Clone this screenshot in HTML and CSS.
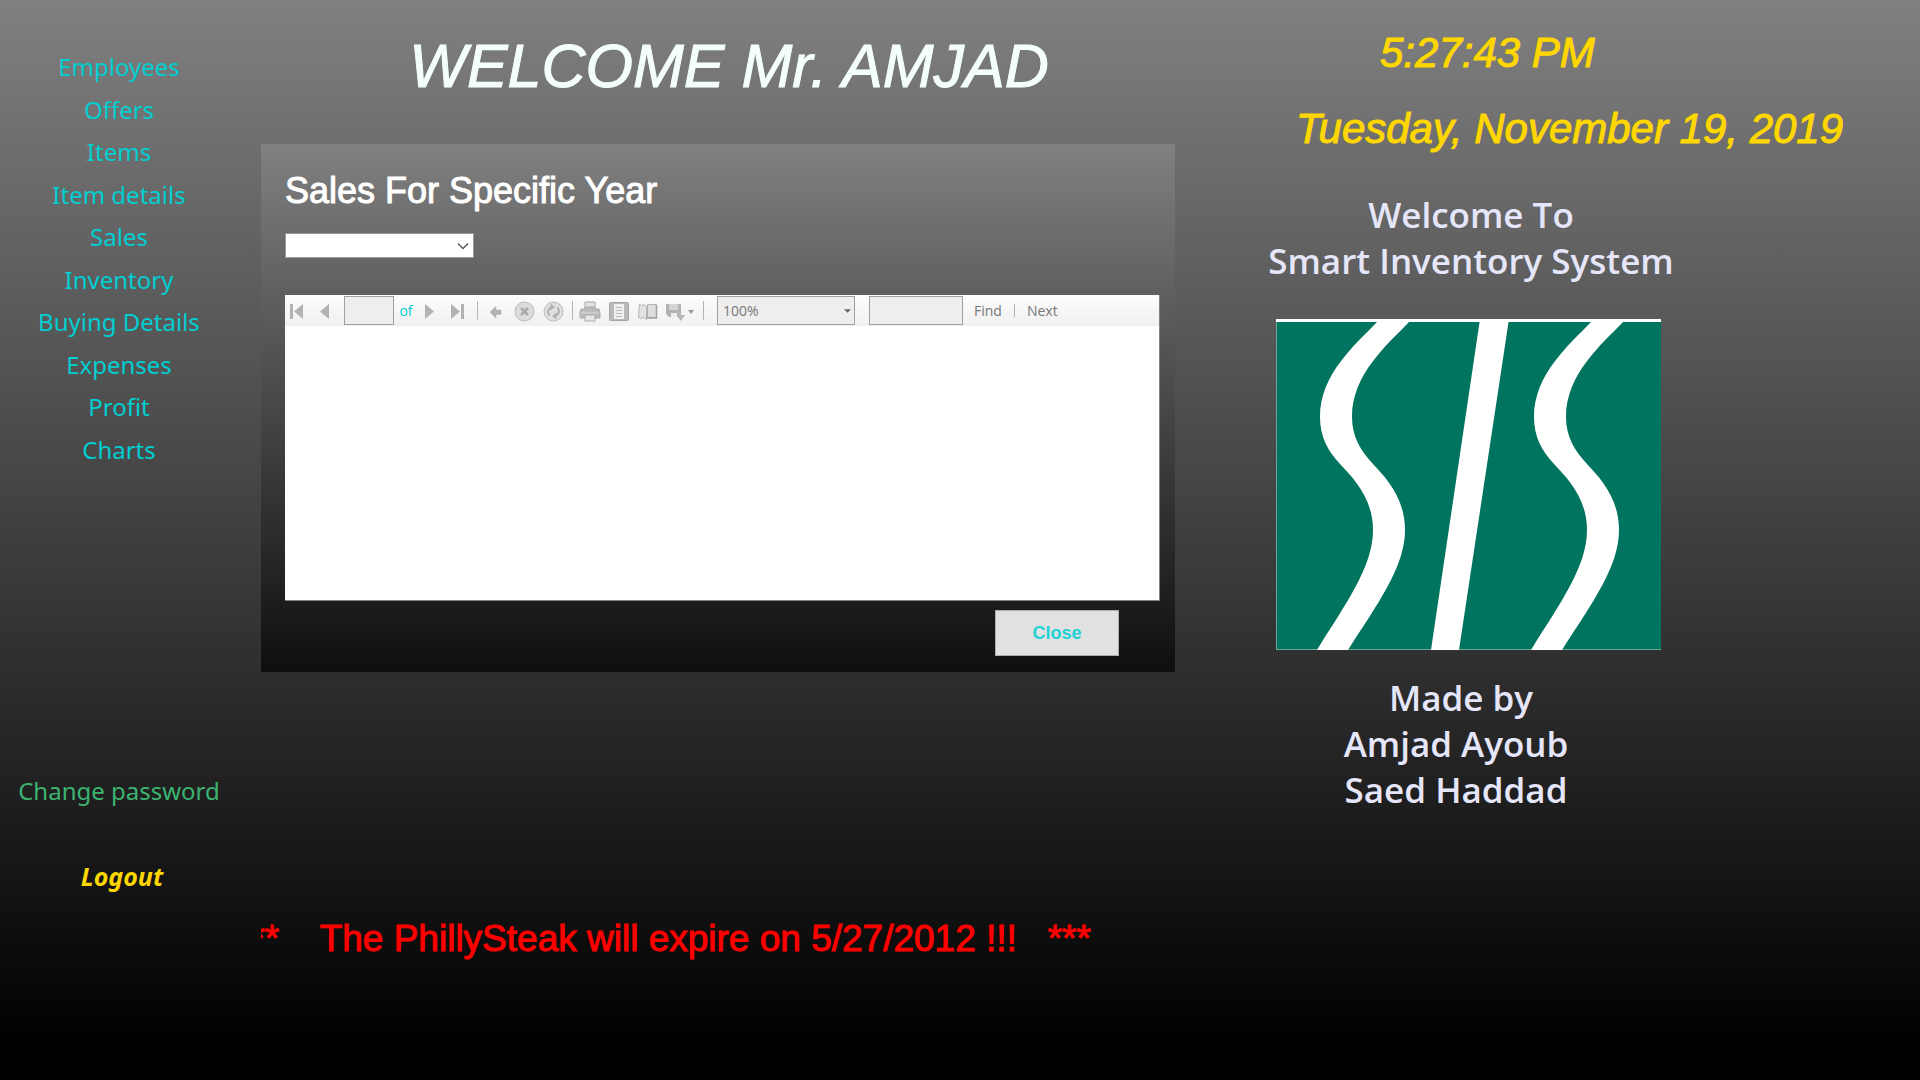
FILE: index.html
```html
<!DOCTYPE html>
<html lang="en">
<head>
<meta charset="utf-8">
<meta name="viewport" content="width=device-width, initial-scale=1">
<title>Smart Inventory System</title>
<link rel="stylesheet" href="styles.css">
</head>
<body>
<div class="app">
  <aside class="sidebar">
    <nav class="menu" aria-label="Main">
      <a href="#employees">Employees</a>
      <a href="#offers">Offers</a>
      <a href="#items">Items</a>
      <a href="#item-details">Item details</a>
      <a href="#sales">Sales</a>
      <a href="#inventory">Inventory</a>
      <a href="#buying">Buying Details</a>
      <a href="#expenses">Expenses</a>
      <a href="#profit">Profit</a>
      <a href="#charts">Charts</a>
    </nav>
    <a class="password" href="#password">Change password</a>
    <a class="logout" href="#logout">Logout</a>
  </aside>

  <main class="content">
    <h1 class="welcome">WELCOME Mr. AMJAD</h1>
    <section class="panel">
      <h2 class="panel-title"><label for="year">Sales For Specific Year</label></h2>
      <div class="year-box">
        <select class="year" id="year"><option></option></select>
        <svg class="chevron" viewBox="0 0 12 8"><path d="M1 1.500l5 5 5-5" fill="none" stroke="#555" stroke-width="1.300"/></svg>
      </div>
      <div class="report">
        <div class="toolbar">
          <div class="group">
            <button class="tool" aria-label="First page"><svg viewBox="0 0 24 24"><path d="M5 5h3v15H5zM18 5v15L9 12.500z"/></svg></button>
            <button class="tool" aria-label="Previous page"><svg viewBox="0 0 24 24"><path d="M16 5v15l-9-7.500z"/></svg></button>
          </div>
          <input class="field page" aria-label="Current page" disabled>
          <span class="of">of</span>
          <div class="group">
            <button class="tool" aria-label="Next page"><svg viewBox="0 0 24 24"><path d="M7 5v15l9-7.500z"/></svg></button>
            <button class="tool" aria-label="Last page"><svg viewBox="0 0 24 24"><path d="M5 5v15l9-7.500zM15 5h3v15h-3z"/></svg></button>
          </div>
          <span class="sep"></span>
          <div class="group wide">
            <button class="tool" aria-label="Back"><svg viewBox="0 0 24 24"><path d="M7 13l6-5.500v3.500h5v4.500h-5v3.500z" stroke="#aaa" stroke-width=".5"/></svg></button>
            <button class="tool" aria-label="Stop"><svg viewBox="0 0 24 24"><circle cx="12.500" cy="12.500" r="9.500" fill="#dcdcdc" stroke="#bcbcbc"/><path d="M9 9l7 7M16 9l-7 7" stroke="#aaa" stroke-width="2.600"/></svg></button>
            <button class="tool" aria-label="Refresh"><svg viewBox="0 0 24 24"><circle cx="12.500" cy="12.500" r="9.500" fill="#e0e0e0" stroke="#bcbcbc"/><path d="M8.500 16.500c-2.500-3-1.500-7.500 2-8.500M16.500 8.500c2.500 3 1.500 7.500-2 8.500" fill="none" stroke="#aaa" stroke-width="1.800"/><path d="M9.500 4.500l4.500 3.500-4.500 3.500zM15.500 20.500l-4.500-3.500 4.500-3.500z"/></svg></button>
          </div>
          <span class="sep"></span>
          <div class="group wide">
            <button class="tool" aria-label="Print"><svg viewBox="0 0 24 24"><path d="M7 3h10v7H7z" fill="#e2e2e2" stroke="#aaa"/><path d="M3 10h4V8h10v2h4l1 3v6H2v-6z" fill="#bcbcbc" stroke="#ababab"/><path d="M7 16h10v6H7z" fill="#e8e8e8" stroke="#aaa"/><path d="M3 14h18" stroke="#ddd"/></svg></button>
            <button class="tool" aria-label="Print layout"><svg viewBox="0 0 24 24"><rect x="2.500" y="3.500" width="19" height="18" rx="1" fill="#bababa" stroke="#a6a6a6"/><path d="M7 5h10v15H7z" fill="#f0f0f0"/><path d="M9 8.500h6M9 11.500h6M9 14.500h6M9 17.500h6" stroke="#b8b8b8"/></svg></button>
            <button class="tool" aria-label="Page setup"><svg viewBox="0 0 24 24"><path d="M11.500 5.500h9v13h-9z" fill="#dedede" stroke="#b2b2b2"/><path d="M20.500 6v13H11" fill="none" stroke="#a2a2a2" stroke-width="1.500"/><path d="M3.500 5.500l2 1 2-1 3 2v13l-3-2-2 1-3-1z" fill="#e2e2e2" stroke="#b2b2b2"/></svg></button>
          </div>
          <button class="tool export" aria-label="Export"><svg viewBox="0 0 32 24"><path d="M2 5h15v13H5l-3-3z" fill="#b2b2b2"/><path d="M5 5h9v6H5z" fill="#d4d4d4"/><path d="M7 14h6v4H7z" fill="#eee"/><path d="M13 13h4v3h4l-4 6-4-5z" fill="#b5b5b5"/><path d="M24 11h6l-3 4z" fill="#999"/></svg></button>
          <span class="sep"></span>
          <div class="zoom-box">
            <select class="field zoom" aria-label="Zoom" disabled><option>100%</option></select>
            <svg class="caret" viewBox="0 0 8 4"><path d="M0 0h8L4 4z" fill="#666"/></svg>
          </div>
          <input class="field search" aria-label="Find text" disabled>
          <button class="text-tool">Find</button>
          <span class="sep short"></span>
          <button class="text-tool">Next</button>
        </div>
      </div>
      <button class="close">Close</button>
    </section>
    <p class="ticker">***    The PhillySteak will expire on 5/27/2012 !!!   ***</p>
  </main>

  <aside class="info">
    <time class="clock">5:27:43 PM</time>
    <time class="date" datetime="2019-11-19">Tuesday, November 19, 2019</time>
    <div class="brand">
      <p class="caption">Welcome To<br>Smart Inventory System</p>
      <svg class="logo" viewBox="0 0 385 331" role="img" aria-label="SIS">
        <rect width="385" height="331" fill="#00745e"/>
        <path d="M0 330.500H385M.5 0V331" stroke="#6fa597"/>
        <path d="M0 0H385V3H0z" fill="#fff"/>
        <g fill="#fff">
          <path id="curve" d="M103 0L101 3C80 25 44 55 44 98C44 118 52 132 64 145S97 178 97 211C97 248 70 284 41 331H72C102 284 129 248 129 211C129 178 109 158 97 145S76 118 76 98C76 55 112 25 133 3L136 0z"/>
          <use href="#curve" x="214"/>
          <path d="M204 0H233L183 331H155z"/>
        </g>
      </svg>
      <div class="credits">
        <p class="caption made">Made by</p>
        <p class="caption">Amjad Ayoub<br>Saed Haddad</p>
      </div>
    </div>
  </aside>
</div>
</body>
</html>
```
FILE: styles.css
```css
* {
  box-sizing: border-box;
}

body {
  margin: 0;
  min-height: 100vh;
  background: linear-gradient(#808080, #000 97%) no-repeat #000;
  font-family: "Liberation Sans", Arial, sans-serif;
}

h1, h2, p {
  margin: 0;
  font-weight: 400;
}

a {
  text-decoration: none;
}

.app {
  display: grid;
  grid-template-columns: minmax(0, 261fr) minmax(0, 914fr) minmax(0, 745fr);
  min-height: 100vh;
}

.sidebar {
  display: flex;
  flex-direction: column;
  padding: 46px 23px 0 0;
  font-family: "Noto Sans", "Segoe UI", sans-serif;
  font-size: 24px;
  line-height: 42px;
  text-align: center;
  white-space: nowrap;
}

.menu {
  display: grid;
  grid-auto-rows: 1fr;
  min-height: 425px;
}

.menu a {
  color: #00ced1;
}

.password {
  margin-top: 299px;
  color: #3cb371;
}

.logout {
  margin-top: 43px;
  padding-left: 6px;
  color: #ffd700;
  font-size: 25px;
  font-weight: 700;
  font-style: italic;
}

.welcome,
.panel-title,
.ticker,
.clock,
.date {
  -webkit-text-stroke: 1px currentColor;
}

.welcome {
  height: 144px;
  padding: 31px 0 0 22px;
  color: #f5fffa;
  font-size: 61px;
  line-height: 70px;
  font-style: italic;
  text-align: center;
  white-space: nowrap;
}

.panel {
  display: flex;
  flex-direction: column;
  padding: 24px 15px 16px 24px;
  background: linear-gradient(#808080, #0e0e0e);
}

.panel-title {
  color: #fff;
  font-size: 36px;
  line-height: 46px;
  white-space: nowrap;
}

.year-box {
  position: relative;
  width: 189px;
  margin-top: 19px;
}

.year {
  display: block;
  width: 100%;
  height: 25px;
  border: 1px solid #999;
  border-radius: 0;
  background: #fff;
  appearance: none;
}

.chevron {
  position: absolute;
  right: 5px;
  top: 9px;
  width: 12px;
  height: 8px;
  pointer-events: none;
}

.report {
  height: 306px;
  margin-top: 37px;
  border: solid #828282;
  border-width: 0 1px 1px 0;
  background: #fff;
}

.toolbar {
  display: flex;
  align-items: center;
  height: 31px;
  overflow: hidden;
  background: linear-gradient(#fdfdfd, #f0f0f0);
  font-family: "Open Sans", "Segoe UI", sans-serif;
  font-size: 14px;
}

.toolbar > * {
  flex: none;
}

.group {
  display: flex;
  gap: 4px;
}

.wide {
  gap: 5px;
}

.tool {
  width: 24px;
  height: 24px;
  padding: 0;
  border: 0;
  background: none;
}

.tool svg {
  display: block;
  fill: #b2b2b2;
}

.export {
  width: 32px;
  margin-left: 4px;
}

.field {
  height: 29px;
  border: 1px solid #a0a0a0;
  border-radius: 0;
  background: #eee;
  color: #777;
  font: inherit;
}

.page {
  width: 50px;
  margin-left: 7px;
}

.of {
  width: 24px;
  color: #00ced1;
  text-align: center;
}

.sep {
  width: 1px;
  height: 19px;
  margin: 0 5px 0 7px;
  background: #b5b5b5;
}

.short {
  height: 13px;
  margin: 0 12px;
}

.zoom-box {
  position: relative;
  margin: 0 14px 0 8px;
}

.zoom {
  display: block;
  width: 138px;
  padding: 0 5px;
  opacity: 1;
  appearance: none;
}

.caret {
  position: absolute;
  right: 4px;
  top: 13px;
  width: 7px;
  height: 4px;
}

.search {
  width: 94px;
  margin-right: 11px;
}

.text-tool {
  padding: 0;
  border: 0;
  background: none;
  color: #777;
  font: inherit;
}

.close {
  align-self: flex-end;
  width: 124px;
  height: 46px;
  margin: 9px 41px 0 0;
  border: 1px solid #adadad;
  background: #e1e1e1;
  color: #1fd2d6;
  font: 700 18px "Liberation Sans", Arial, sans-serif;
}

.ticker {
  margin-top: 246px;
  overflow: hidden;
  color: #f00;
  font-size: 37px;
  line-height: 42px;
  text-indent: -25px;
  white-space: pre;
}

.info {
  padding-top: 29px;
  white-space: nowrap;
}

.clock,
.date {
  display: block;
  color: #ffd700;
  font-size: 42px;
  line-height: 48px;
  font-style: italic;
}

.clock {
  padding-left: 205px;
}

.date {
  margin-top: 28px;
  padding-left: 121px;
}

.brand {
  display: flex;
  flex-direction: column;
  align-items: center;
  width: 408px;
  margin: 39px 0 0 92px;
}

.caption {
  color: #e6e6fa;
  font-family: "Open Sans", "Trebuchet MS", sans-serif;
  font-size: 35px;
  font-weight: 600;
  line-height: 46px;
  text-align: center;
}

.logo {
  width: 385px;
  margin: 35px 6px 25px 0;
}

.credits {
  margin-right: 30px;
}

.made {
  padding-left: 10px;
}
```
